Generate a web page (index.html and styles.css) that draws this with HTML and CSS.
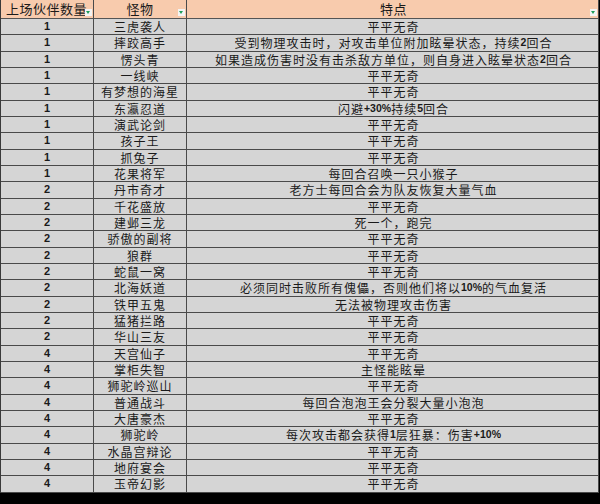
FILE: index.html
```html
<!DOCTYPE html>
<html lang="zh">
<head>
<meta charset="utf-8">
<link rel="stylesheet" href="styles.css">
</head>
<body>
<div class="sheet">
  <div class="row head">
    <div class="cell c1"><span class="txt">上场伙伴数量</span><span class="filter"><i></i></span></div>
    <div class="cell c2"><span class="txt">怪物</span><span class="filter"><i></i></span></div>
    <div class="cell c3"><span class="txt">特点</span><span class="filter"><i></i></span></div>
  </div>
  <div class="row"><div class="cell c1 num">1</div><div class="cell c2">三虎袭人</div><div class="cell c3">平平无奇</div></div>
  <div class="row"><div class="cell c1 num">1</div><div class="cell c2">摔跤高手</div><div class="cell c3">受到物理攻击时，对攻击单位附加眩晕状态，持续<b>2</b>回合</div></div>
  <div class="row"><div class="cell c1 num">1</div><div class="cell c2">愣头青</div><div class="cell c3">如果造成伤害时没有击杀敌方单位，则自身进入眩晕状态<b>2</b>回合</div></div>
  <div class="row"><div class="cell c1 num">1</div><div class="cell c2">一线峡</div><div class="cell c3">平平无奇</div></div>
  <div class="row"><div class="cell c1 num">1</div><div class="cell c2">有梦想的海星</div><div class="cell c3">平平无奇</div></div>
  <div class="row"><div class="cell c1 num">1</div><div class="cell c2">东瀛忍道</div><div class="cell c3">闪避<b>+30%</b>持续<b>5</b>回合</div></div>
  <div class="row"><div class="cell c1 num">1</div><div class="cell c2">演武论剑</div><div class="cell c3">平平无奇</div></div>
  <div class="row"><div class="cell c1 num">1</div><div class="cell c2">孩子王</div><div class="cell c3">平平无奇</div></div>
  <div class="row"><div class="cell c1 num">1</div><div class="cell c2">抓兔子</div><div class="cell c3">平平无奇</div></div>
  <div class="row"><div class="cell c1 num">1</div><div class="cell c2">花果将军</div><div class="cell c3">每回合召唤一只小猴子</div></div>
  <div class="row"><div class="cell c1 num">2</div><div class="cell c2">丹市奇才</div><div class="cell c3">老方士每回合会为队友恢复大量气血</div></div>
  <div class="row"><div class="cell c1 num">2</div><div class="cell c2">千花盛放</div><div class="cell c3">平平无奇</div></div>
  <div class="row"><div class="cell c1 num">2</div><div class="cell c2">建邺三龙</div><div class="cell c3">死一个，跑完</div></div>
  <div class="row"><div class="cell c1 num">2</div><div class="cell c2">骄傲的副将</div><div class="cell c3">平平无奇</div></div>
  <div class="row"><div class="cell c1 num">2</div><div class="cell c2">狼群</div><div class="cell c3">平平无奇</div></div>
  <div class="row"><div class="cell c1 num">2</div><div class="cell c2">蛇鼠一窝</div><div class="cell c3">平平无奇</div></div>
  <div class="row"><div class="cell c1 num">2</div><div class="cell c2">北海妖道</div><div class="cell c3">必须同时击败所有傀儡，否则他们将以<b>10%</b>的气血复活</div></div>
  <div class="row"><div class="cell c1 num">2</div><div class="cell c2">铁甲五鬼</div><div class="cell c3">无法被物理攻击伤害</div></div>
  <div class="row"><div class="cell c1 num">2</div><div class="cell c2">猛猪拦路</div><div class="cell c3">平平无奇</div></div>
  <div class="row"><div class="cell c1 num">2</div><div class="cell c2">华山三友</div><div class="cell c3">平平无奇</div></div>
  <div class="row"><div class="cell c1 num">4</div><div class="cell c2">天宫仙子</div><div class="cell c3">平平无奇</div></div>
  <div class="row"><div class="cell c1 num">4</div><div class="cell c2">掌柜失智</div><div class="cell c3">主怪能眩晕</div></div>
  <div class="row"><div class="cell c1 num">4</div><div class="cell c2">狮驼岭巡山</div><div class="cell c3">平平无奇</div></div>
  <div class="row"><div class="cell c1 num">4</div><div class="cell c2">普通战斗</div><div class="cell c3">每回合泡泡王会分裂大量小泡泡</div></div>
  <div class="row"><div class="cell c1 num">4</div><div class="cell c2">大唐豪杰</div><div class="cell c3">平平无奇</div></div>
  <div class="row"><div class="cell c1 num">4</div><div class="cell c2">狮驼岭</div><div class="cell c3">每次攻击都会获得<b>1</b>层狂暴：伤害<b>+10%</b></div></div>
  <div class="row"><div class="cell c1 num">4</div><div class="cell c2">水晶宫辩论</div><div class="cell c3">平平无奇</div></div>
  <div class="row"><div class="cell c1 num">4</div><div class="cell c2">地府宴会</div><div class="cell c3">平平无奇</div></div>
  <div class="row"><div class="cell c1 num">4</div><div class="cell c2">玉帝幻影</div><div class="cell c3">平平无奇</div></div>
</div>
</body>
</html>
```
FILE: styles.css
```css
html, body {
  margin: 0;
  padding: 0;
  background: #000;
}
.sheet {
  width: 598px;
  border-left: 1px solid #3a3a3a;
  background: #d5d5d5;
  font-family: "Noto Sans CJK SC", "Noto Sans", sans-serif;
  color: #1a1a1a;
}
.row {
  display: grid;
  grid-template-columns: 93px 93px 412px;
  height: 16.34px;
}
.row.head {
  height: 19px;
  background: #f8cbad;
}
.cell {
  box-sizing: border-box;
  border-right: 1px solid #4a4a4a;
  border-bottom: 1px solid #4a4a4a;
  display: flex;
  align-items: center;
  justify-content: center;
  font-size: 12px;
  letter-spacing: 1px;
  line-height: 15px;
  white-space: nowrap;
  position: relative;
}
.head .cell {
  font-size: 13px;
  letter-spacing: 0.5px;
  line-height: 18px;
  border-bottom-color: #555;
}
.head .c1 {
  justify-content: flex-start;
  padding-left: 5px;
}
.c3 {
  padding-left: 2px;
}
.num {
  font-family: "Liberation Sans", Arial, sans-serif;
  font-weight: bold;
  font-size: 11px;
  letter-spacing: 0;
}
b {
  font-family: "Liberation Sans", Arial, sans-serif;
  font-weight: bold;
  font-size: 10.5px;
  letter-spacing: 0;
}
.filter {
  position: absolute;
  right: 1px;
  bottom: 2px;
  width: 7px;
  height: 7px;
  background: #f4f4f4;
}
.filter i {
  position: absolute;
  left: 1px;
  top: 2px;
  width: 0;
  height: 0;
  border-left: 2.5px solid transparent;
  border-right: 2.5px solid transparent;
  border-top: 3px solid #1e9e5a;
}
```
